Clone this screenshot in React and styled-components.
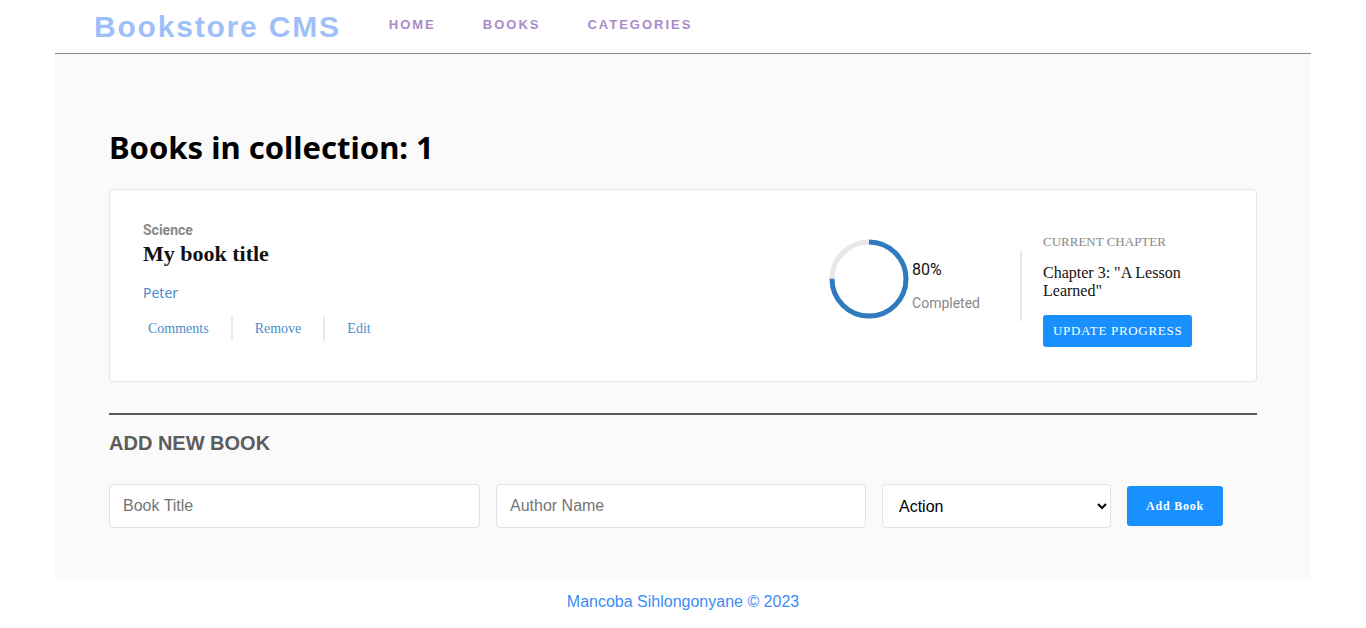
import styled, { createGlobalStyle } from "styled-components";

const GlobalStyle = createGlobalStyle`
  body {
    margin: 0;
    background: #fff;
    font-family: "Liberation Sans", Arial, sans-serif;
  }
`

// STYLED COMPONENTS
const Page = styled.div`
  width: 1256px;
  margin: 0 auto;
`

const Header = styled.header`
  height: 53px;
  display: flex;
  align-items: center;
  padding-left: 39px;
  border-bottom: 1px solid #8a8a8a;
  gap: 48px;
`

const Logo = styled.h1`
  margin: 0;
  font-size: 30px;
  font-weight: 700;
  letter-spacing: 1.8px;
  color: #9fbff9;
  padding-top: 1px;
`

const Nav = styled.nav`
  display: flex;
  gap: 47px;
  margin-bottom: 5px;
`

const NavLink = styled.a`
  font-size: 13px;
  font-weight: 700;
  letter-spacing: 2px;
  color: #a98bc9;
  text-decoration: none;
`

const Main = styled.main`
  background: #fafafa;
  padding: 72px 54px 53px;
`

const Title = styled.h2`
  margin: 0 0 21px;
  font-family: "Noto Sans", "Open Sans", sans-serif;
  font-size: 31px;
  font-weight: 700;
  line-height: 42px;
  color: #000;
`

const Card = styled.div`
  background: #fff;
  border: 1px solid #e6e6e6;
  border-radius: 4px;
  height: 191px;
  display: flex;
  align-items: center;
  padding: 0 33px;
`

const BookInfo = styled.div`
  flex: 1;
  align-self: flex-start;
  display: flex;
  flex-direction: column;
  margin-top: 32px;
`

const Genre = styled.span`
  font-family: Roboto, sans-serif;
  font-size: 14px;
  font-weight: 700;
  color: #888;
`

const BookTitle = styled.h3`
  margin: 3px 0 0;
  font-family: "Liberation Serif", serif;
  font-size: 22px;
  font-weight: 700;
  color: #121212;
`

const Author = styled.span`
  margin-top: 16px;
  font-family: "Noto Sans", sans-serif;
  font-size: 14px;
  color: #4a8ccc;
`

const Actions = styled.div`
  display: flex;
  align-items: center;
  margin-top: 15px;
  margin-left: 5px;
`

const ActionLink = styled.a`
  font-family: "Liberation Serif", serif;
  font-size: 14px;
  color: #4a8ccc;
  padding: 0 22px;
  line-height: 24px;
  border-left: 2px solid #e8e8e8;
  &:first-child {
    padding-left: 0;
    border-left: none;
  }
`

const Progress = styled.div`
  display: flex;
  align-items: center;
  gap: 3px;
  padding-right: 40px;
  border-right: 2px solid #e8e8e8;
  height: 70px;
`

const Ring = styled.svg`
  width: 80px;
  height: 80px;
  margin-bottom: 14px;
`

const ProgressText = styled.div`
  display: flex;
  flex-direction: column;
  gap: 16px;
  font-family: Roboto, "Liberation Sans", sans-serif;
`

const Percent = styled.span`
  font-size: 16px;
  color: #121212;
`

const Completed = styled.span`
  font-size: 14px;
  color: #888;
`

const Chapter = styled.div`
  width: 180px;
  padding-left: 21px;
  font-family: "Liberation Serif", serif;
  margin-top: 10px;
`

const ChapterLabel = styled.div`
  font-size: 13px;
  color: #888;
`

const ChapterName = styled.div`
  margin-top: 14px;
  font-size: 16px;
  line-height: 18px;
  color: #121212;
  width: 150px;
`

const UpdateButton = styled.button`
  margin-top: 15px;
  background: #1890ff;
  color: #fff;
  border: none;
  border-radius: 3px;
  height: 32px;
  padding: 0 10px;
  font-family: "Liberation Serif", serif;
  font-size: 13px;
  letter-spacing: 0.7px;
`

const Divider = styled.hr`
  margin: 31px 0 0;
  border: none;
  border-top: 2px solid #5a5a5a;
`

const FormTitle = styled.h3`
  margin: 17px 0 0;
  font-size: 20px;
  font-weight: 700;
  color: #5c5c5c;
  line-height: 23px;
`

const Form = styled.form`
  margin-top: 29px;
  display: flex;
  align-items: center;
  gap: 16px;
`

const Field = styled.input`
  box-sizing: border-box;
  width: ${(p) => p.$w}px;
  height: 44px;
  border: 1px solid #e3e3e3;
  border-radius: 4px;
  padding: 0 13px;
  font-family: "Liberation Sans", sans-serif;
  font-size: 16px;
  background: #fff;
  &::placeholder {
    color: #757575;
  }
`

const SelectField = styled.select`
  box-sizing: border-box;
  width: 229px;
  height: 44px;
  border: 1px solid #e3e3e3;
  border-radius: 4px;
  padding: 0 12px;
  font-family: "Liberation Sans", sans-serif;
  font-size: 16px;
  color: #000;
  background: #fff;
`

const AddButton = styled.button`
  width: 96px;
  height: 40px;
  background: #1890ff;
  color: #fff;
  border: none;
  border-radius: 3px;
  font-family: "Liberation Serif", serif;
  font-size: 12px;
  font-weight: 700;
  letter-spacing: 0.8px;
`

const Footer = styled.footer`
  text-align: center;
  padding-top: 12px;
  font-size: 16px;
  color: #3d8bf5;
`

export default function App() {
  const r = 37
  const c = 2 * Math.PI * r
  const pct = 0.75

  return (
    <>
      <GlobalStyle />
      <Page>
        <Header>
          <Logo>Bookstore CMS</Logo>
          <Nav>
            <NavLink>HOME</NavLink>
            <NavLink>BOOKS</NavLink>
            <NavLink>CATEGORIES</NavLink>
          </Nav>
        </Header>
        <Main>
          <Title>Books in collection: 1</Title>
          <Card>
            <BookInfo>
              <Genre>Science</Genre>
              <BookTitle>My book title</BookTitle>
              <Author>Peter</Author>
              <Actions>
                <ActionLink>Comments</ActionLink>
                <ActionLink>Remove</ActionLink>
                <ActionLink>Edit</ActionLink>
              </Actions>
            </BookInfo>
            <Progress>
              <Ring viewBox="0 0 80 80">
                <circle cx="40" cy="40" r={r} fill="none" stroke="#e8e8e8" strokeWidth="5" />
                <circle
                  cx="40"
                  cy="40"
                  r={r}
                  fill="none"
                  stroke="#307bbe"
                  strokeWidth="5"
                  strokeDasharray={`${c * pct} ${c}`}
                  transform="rotate(-90 40 40)"
                />
              </Ring>
              <ProgressText>
                <Percent>80%</Percent>
                <Completed>Completed</Completed>
              </ProgressText>
            </Progress>
            <Chapter>
              <ChapterLabel>CURRENT CHAPTER</ChapterLabel>
              <ChapterName>Chapter 3: "A Lesson Learned"</ChapterName>
              <UpdateButton>UPDATE PROGRESS</UpdateButton>
            </Chapter>
          </Card>
          <Divider />
          <FormTitle>ADD NEW BOOK</FormTitle>
          <Form onSubmit={(e) => e.preventDefault()}>
            <Field $w={371} placeholder="Book Title" />
            <Field $w={370} placeholder="Author Name" />
            <SelectField defaultValue="Action">
              <option>Action</option>
              <option>Science</option>
              <option>Fiction</option>
            </SelectField>
            <AddButton type="submit">Add Book</AddButton>
          </Form>
        </Main>
        <Footer>Mancoba Sihlongonyane © 2023</Footer>
      </Page>
    </>
  )
}
